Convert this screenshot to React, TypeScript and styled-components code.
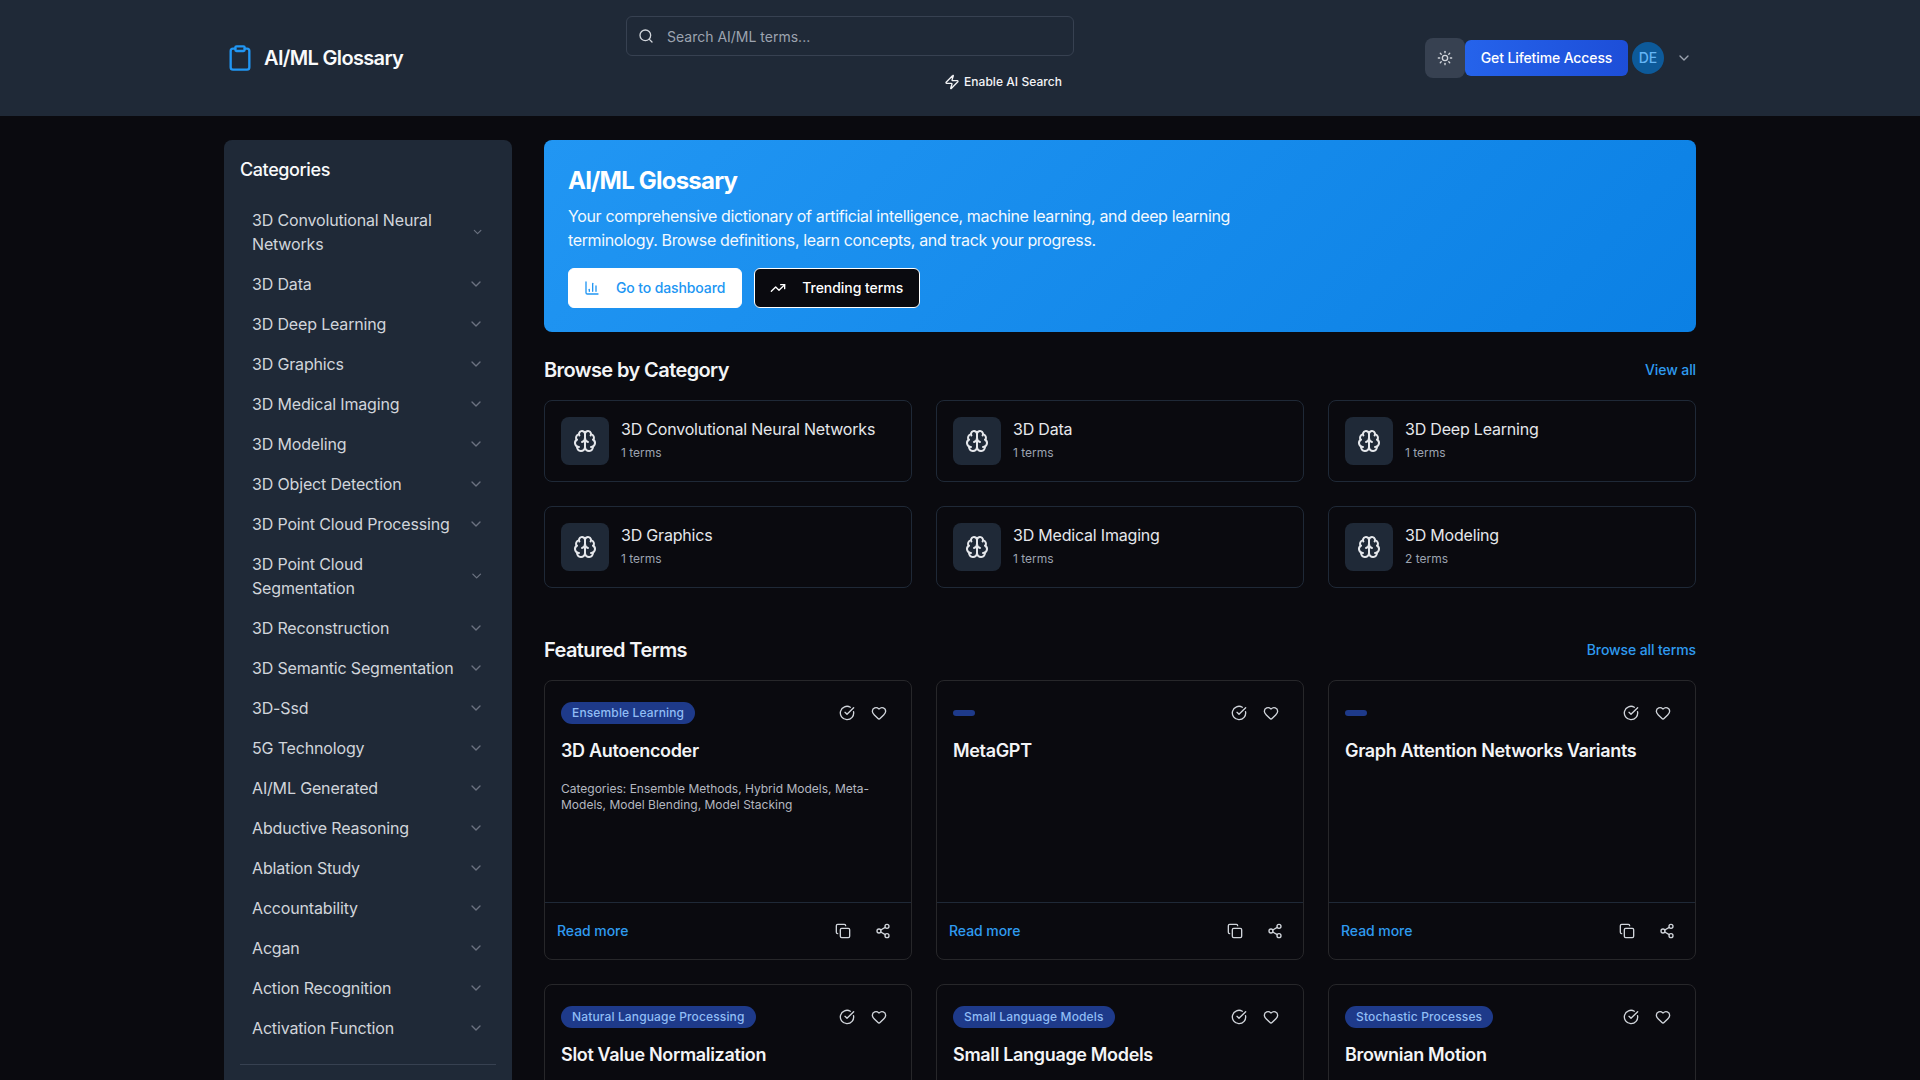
import React from "react";
import styled, { createGlobalStyle } from "styled-components";
import {
  BarChart3,
  Brain,
  ChevronDown,
  CircleCheckBig,
  Clipboard,
  Copy,
  Heart,
  Search,
  Share2,
  Sun,
  TrendingUp,
  Zap,
} from "lucide-react";

const GlobalStyle = createGlobalStyle`
  * { box-sizing: border-box; }
  html, body { margin: 0; height: 100%; overflow: hidden; }
  body {
    background: #0a0a0f;
    color: #f9fafb;
    font-family: Inter, "Liberation Sans", sans-serif;
  }
  button { font-family: inherit; }
`;

const Page = styled.div`
  height: 100vh;
  overflow: hidden;
  background: #0a0a0f;
`;

const Header = styled.header`
  height: 116px;
  background: #1f2937;
  padding: 16px 224px;
  display: flex;
  align-items: center;
`;

const Logo = styled.div`
  width: 402px;
  display: flex;
  align-items: center;
  gap: 10px;
  flex: none;
  color: #2196f3;
  padding-left: 2px;
`;

const LogoText = styled.span`
  font-size: 20px;
  line-height: 28px;
  font-weight: 600;
  letter-spacing: -0.66px;
  color: #f9fafb;
`;

const SearchColumn = styled.div`
  width: 448px;
  flex: none;
  display: flex;
  flex-direction: column;
  align-items: flex-end;
  gap: 8px;
`;

const SearchBox = styled.div`
  width: 100%;
  height: 40px;
  border: 1px solid #374151;
  border-radius: 6px;
  display: flex;
  align-items: center;
  gap: 13px;
  padding: 0 11px;
  color: #d1d5db;
`;

const SearchPlaceholder = styled.span`
  font-size: 14px;
  color: #9ca3af;
`;

const AiButton = styled.button`
  height: 36px;
  border: 0;
  background: transparent;
  color: #f3f4f6;
  display: flex;
  align-items: center;
  gap: 4px;
  padding: 0 12px;
  font-size: 12px;
  line-height: 16px;
  font-weight: 500;
  letter-spacing: 0.05px;
`;

const HeaderActions = styled.div`
  margin-left: auto;
  display: flex;
  align-items: center;
`;

const ThemeButton = styled.button`
  width: 40px;
  height: 40px;
  border: 0;
  border-radius: 8px;
  background: #374151;
  color: #d1d5db;
  display: grid;
  place-items: center;
  padding: 0;
`;

const AccessButton = styled.button`
  width: 163px;
  height: 36px;
  border: 0;
  border-radius: 6px;
  background: linear-gradient(90deg, #2563eb, #1d4ed8);
  color: #fff;
  font-size: 14px;
  line-height: 20px;
  font-weight: 500;
  letter-spacing: -0.12px;
  padding: 0;
`;

const AccountButton = styled.div`
  display: flex;
  align-items: center;
  gap: 12px;
  margin-left: 4px;
  padding-right: 4px;
  color: #9ca3af;
`;

const Avatar = styled.div`
  width: 32px;
  height: 32px;
  border-radius: 50%;
  background: #0d5a9a;
  color: #64b5f6;
  display: grid;
  place-items: center;
  font-size: 14px;
  line-height: 20px;
  font-weight: 500;
`;

const Layout = styled.div`
  display: grid;
  grid-template-columns: 288px 1152px;
  gap: 32px;
  padding: 24px 224px;
`;

const Sidebar = styled.aside`
  background: #1f2937;
  border-radius: 8px;
  padding: 16px;
`;

const SidebarTitle = styled.h2`
  margin: 0 0 16px;
  font-size: 18px;
  line-height: 28px;
  font-weight: 500;
  letter-spacing: -0.4px;
  color: #f9fafb;
`;

const CategoryRow = styled.div`
  display: flex;
  align-items: center;
  justify-content: space-between;
  gap: 8px;
  padding: 8px 12px;
  font-size: 16px;
  line-height: 24px;
  letter-spacing: -0.16px;
  color: #d1d5db;
`;

const RowChevron = styled(ChevronDown)`
  color: #6b7280;
`;

const SidebarDivider = styled.hr`
  margin: 16px 0 0;
  border: 0;
  border-top: 1px solid #374151;
`;

const Main = styled.main`
  min-width: 0;
`;

const Hero = styled.section`
  height: 192px;
  border-radius: 8px;
  padding: 24px;
  background: linear-gradient(135deg, #2196f3, #0b80e4);
  color: #fff;
`;

const HeroTitle = styled.h1`
  margin: 1px 0 7px;
  font-size: 24px;
  line-height: 32px;
  font-weight: 700;
  letter-spacing: -0.79px;
`;

const HeroText = styled.p`
  margin: 0 0 16px;
  max-width: 672px;
  font-size: 16px;
  line-height: 24px;
  letter-spacing: -0.36px;
  color: #f3f9fe;
`;

const HeroActions = styled.div`
  display: flex;
  gap: 12px;
`;

const HeroButton = styled.button<{ $dark?: boolean }>`
  height: 40px;
  border-radius: 6px;
  display: flex;
  align-items: center;
  gap: 16px;
  padding: 0 16px 0 15px;
  font-size: 14px;
  line-height: 20px;
  font-weight: 500;
  letter-spacing: ${(p) => (p.$dark ? "-0.05px" : "-0.12px")};
  border: 1px solid #fff;
  background: ${(p) => (p.$dark ? "#0a0a0f" : "#fff")};
  color: ${(p) => (p.$dark ? "#fff" : "#2196f3")};
`;

const SectionHead = styled.div<{ $top: number }>`
  margin: ${(p) => p.$top}px 0 16px;
  display: flex;
  align-items: center;
  justify-content: space-between;
`;

const SectionTitle = styled.h2`
  margin: 0;
  font-size: 20px;
  line-height: 28px;
  font-weight: 600;
  letter-spacing: -0.6px;
  color: #f3f4f6;
`;

const SectionLink = styled.a`
  font-size: 14px;
  line-height: 20px;
  font-weight: 500;
  letter-spacing: -0.1px;
  color: #2f9bf0;
`;

const Grid = styled.div`
  display: grid;
  grid-template-columns: repeat(3, 368px);
  gap: 24px;
`;

const CategoryCard = styled.div`
  height: 82px;
  border: 1px solid #1f2937;
  border-radius: 8px;
  padding: 16px;
  display: flex;
  align-items: flex-start;
  gap: 12px;
`;

const CategoryIcon = styled.div`
  width: 48px;
  height: 48px;
  flex: none;
  border-radius: 8px;
  background: #1f2937;
  color: #e5e7eb;
  display: grid;
  place-items: center;
`;

const CategoryName = styled.div`
  font-size: 16px;
  line-height: 24px;
  font-weight: 400;
  letter-spacing: -0.2px;
  color: #e5e7eb;
`;

const CategoryCount = styled.div`
  font-size: 12px;
  line-height: 16px;
  margin-top: 4px;
  color: #9ca3af;
`;

const TermCard = styled.article`
  height: 280px;
  border: 1px solid #27272a;
  border-radius: 8px;
  display: flex;
  flex-direction: column;
`;

const TermBody = styled.div`
  flex: 1;
  padding: 16px;
`;

const TermTop = styled.div`
  height: 32px;
  margin-bottom: 8px;
  display: flex;
  align-items: center;
  justify-content: space-between;
`;

const Badge = styled.span`
  display: inline-block;
  border: 1px solid transparent;
  border-radius: 999px;
  padding: 2px 10px;
  background: #1e3a8a;
  color: #90bdf5;
  font-size: 12px;
  line-height: 16px;
  font-weight: 500;
  letter-spacing: 0.14px;
`;

const IconGroup = styled.div`
  display: flex;
  color: #d1d5db;
`;

const IconButton = styled.button`
  width: 32px;
  height: 32px;
  border: 0;
  padding: 0;
  background: transparent;
  color: inherit;
  display: grid;
  place-items: center;
`;

const TermTitle = styled.h3`
  margin: 0 0 16px;
  font-size: 18px;
  line-height: 28px;
  font-weight: 600;
  letter-spacing: -0.33px;
  color: #f3f4f6;
`;

const TermText = styled.p`
  margin: 0;
  font-size: 12px;
  line-height: 16px;
  color: #b4b8c0;
`;

const TermFooter = styled.div`
  height: 57px;
  border-top: 1px solid #1f2937;
  padding: 0 12px;
  display: flex;
  align-items: center;
  justify-content: space-between;
`;

const FooterIcons = styled(IconGroup)`
  gap: 8px;
`;

const ReadMore = styled.a`
  font-size: 14px;
  line-height: 20px;
  font-weight: 500;
  letter-spacing: -0.05px;
  color: #2f9bf0;
`;

const sidebarItems = [
  "3D Convolutional Neural Networks",
  "3D Data",
  "3D Deep Learning",
  "3D Graphics",
  "3D Medical Imaging",
  "3D Modeling",
  "3D Object Detection",
  "3D Point Cloud Processing",
  "3D Point Cloud Segmentation",
  "3D Reconstruction",
  "3D Semantic Segmentation",
  "3D-Ssd",
  "5G Technology",
  "AI/ML Generated",
  "Abductive Reasoning",
  "Ablation Study",
  "Accountability",
  "Acgan",
  "Action Recognition",
  "Activation Function",
];

const categories = [
  ["3D Convolutional Neural Networks", "1 terms"],
  ["3D Data", "1 terms"],
  ["3D Deep Learning", "1 terms"],
  ["3D Graphics", "1 terms"],
  ["3D Medical Imaging", "1 terms"],
  ["3D Modeling", "2 terms"],
];

const terms = [
  {
    badge: "Ensemble Learning",
    title: "3D Autoencoder",
    text: "Categories: Ensemble Methods, Hybrid Models, Meta-Models, Model Blending, Model Stacking",
  },
  { badge: "", title: "MetaGPT", text: "" },
  { badge: "", title: "Graph Attention Networks Variants", text: "" },
  { badge: "Natural Language Processing", title: "Slot Value Normalization", text: "" },
  { badge: "Small Language Models", title: "Small Language Models", text: "" },
  { badge: "Stochastic Processes", title: "Brownian Motion", text: "" },
];

export default function App() {
  return (
    <Page>
      <GlobalStyle />
      <Header>
        <Logo>
          <Clipboard size={28} strokeWidth={2} />
          <LogoText>AI/ML Glossary</LogoText>
        </Logo>
        <SearchColumn>
          <SearchBox>
            <Search size={16} />
            <SearchPlaceholder>Search AI/ML terms...</SearchPlaceholder>
          </SearchBox>
          <AiButton>
            <Zap size={16} />
            Enable AI Search
          </AiButton>
        </SearchColumn>
        <HeaderActions>
          <ThemeButton>
            <Sun size={16} />
          </ThemeButton>
          <AccessButton>Get Lifetime Access</AccessButton>
          <AccountButton>
            <Avatar>DE</Avatar>
            <ChevronDown size={16} />
          </AccountButton>
        </HeaderActions>
      </Header>
      <Layout>
        <Sidebar>
          <SidebarTitle>Categories</SidebarTitle>
          {sidebarItems.map((item) => (
            <CategoryRow key={item}>
              <span>{item}</span>
              <RowChevron size={16} />
            </CategoryRow>
          ))}
          <SidebarDivider />
        </Sidebar>
        <Main>
          <Hero>
            <HeroTitle>AI/ML Glossary</HeroTitle>
            <HeroText>
              Your comprehensive dictionary of artificial intelligence, machine learning, and deep
              learning terminology. Browse definitions, learn concepts, and track your progress.
            </HeroText>
            <HeroActions>
              <HeroButton>
                <BarChart3 size={16} />
                Go to dashboard
              </HeroButton>
              <HeroButton $dark>
                <TrendingUp size={16} />
                Trending terms
              </HeroButton>
            </HeroActions>
          </Hero>
          <SectionHead $top={24}>
            <SectionTitle>Browse by Category</SectionTitle>
            <SectionLink>View all</SectionLink>
          </SectionHead>
          <Grid>
            {categories.map(([name, count]) => (
              <CategoryCard key={name}>
                <CategoryIcon>
                  <Brain size={24} />
                </CategoryIcon>
                <div>
                  <CategoryName>{name}</CategoryName>
                  <CategoryCount>{count}</CategoryCount>
                </div>
              </CategoryCard>
            ))}
          </Grid>
          <SectionHead $top={48}>
            <SectionTitle>Featured Terms</SectionTitle>
            <SectionLink>Browse all terms</SectionLink>
          </SectionHead>
          <Grid>
            {terms.map((term) => (
              <TermCard key={term.title}>
                <TermBody>
                  <TermTop>
                    <Badge>{term.badge}</Badge>
                    <IconGroup>
                      <IconButton>
                        <CircleCheckBig size={16} />
                      </IconButton>
                      <IconButton>
                        <Heart size={16} />
                      </IconButton>
                    </IconGroup>
                  </TermTop>
                  <TermTitle>{term.title}</TermTitle>
                  {term.text && <TermText>{term.text}</TermText>}
                </TermBody>
                <TermFooter>
                  <ReadMore>Read more</ReadMore>
                  <FooterIcons>
                    <IconButton>
                      <Copy size={16} />
                    </IconButton>
                    <IconButton>
                      <Share2 size={16} />
                    </IconButton>
                  </FooterIcons>
                </TermFooter>
              </TermCard>
            ))}
          </Grid>
        </Main>
      </Layout>
    </Page>
  );
}
